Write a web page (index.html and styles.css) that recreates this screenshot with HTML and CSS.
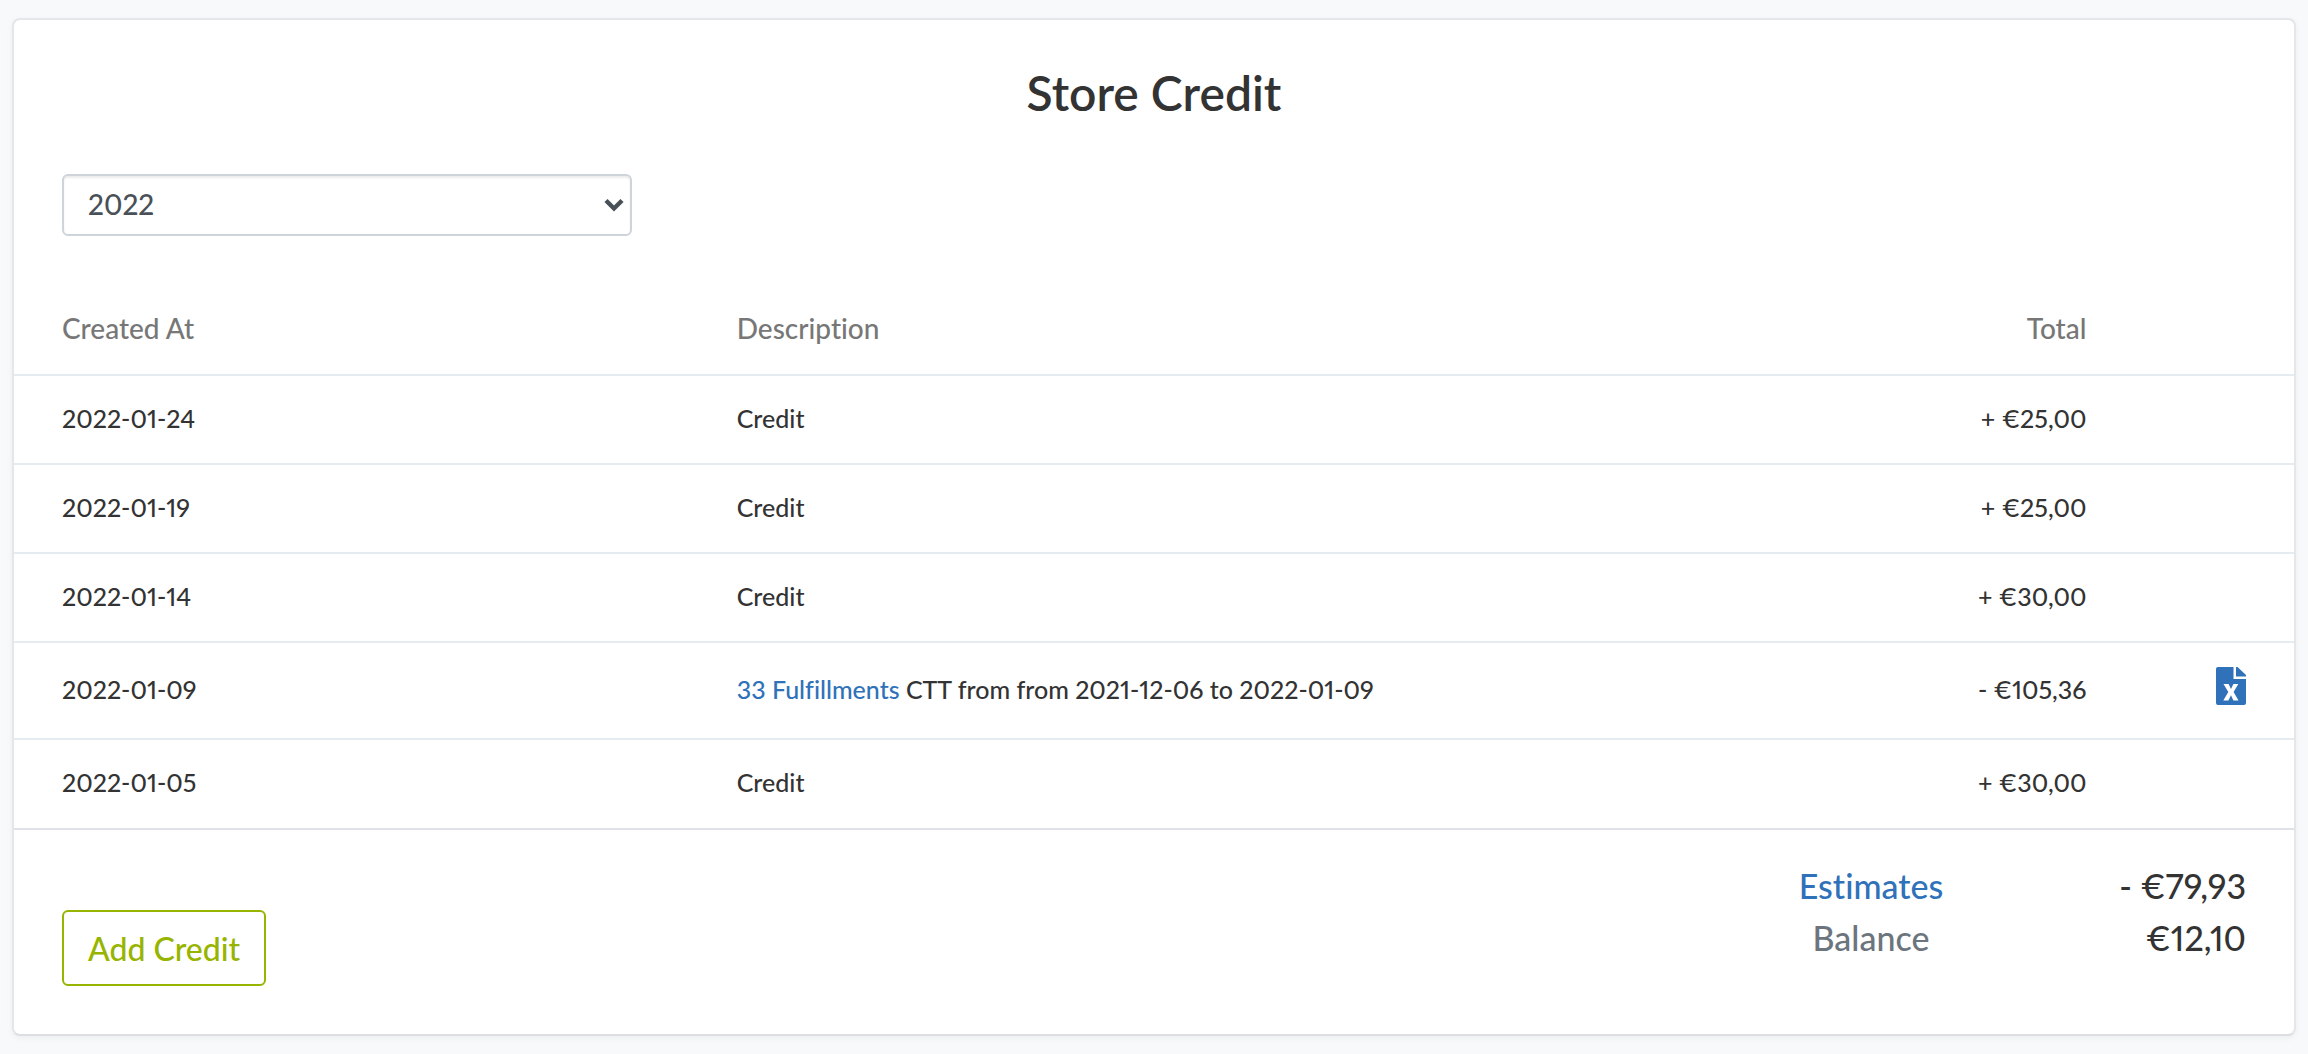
FILE: index.html
```html
<!DOCTYPE html>
<html lang="en">
<head>
    <meta charset="UTF-8">
    <meta name="viewport" content="width=device-width, initial-scale=1.0">
    <title>Store Credit</title>
    <link rel="stylesheet" href="styles.css">
</head>
<body>
    <main class="card">
        <h1 class="card-title">Store Credit</h1>

        <div class="year-filter">
            <select class="year-select" aria-label="Year">
                <option selected>2022</option>
                <option>2021</option>
            </select>
            <svg class="year-arrow" viewBox="0 0 20 14" aria-hidden="true">
                <path d="M2 2.5 L10 10.5 L18 2.5" fill="none" stroke="currentColor" stroke-width="4.4"/>
            </svg>
        </div>

        <table class="credit-table">
            <thead>
                <tr>
                    <th class="col-date" scope="col">Created At</th>
                    <th class="col-description" scope="col">Description</th>
                    <th class="col-total" scope="col">Total</th>
                    <td class="col-file"></td>
                </tr>
            </thead>
            <tbody>
                <tr>
                    <td>2022-01-24</td>
                    <td>Credit</td>
                    <td class="col-total">+ €25,00</td>
                    <td class="col-file"></td>
                </tr>
                <tr>
                    <td>2022-01-19</td>
                    <td>Credit</td>
                    <td class="col-total">+ €25,00</td>
                    <td class="col-file"></td>
                </tr>
                <tr>
                    <td>2022-01-14</td>
                    <td>Credit</td>
                    <td class="col-total">+ €30,00</td>
                    <td class="col-file"></td>
                </tr>
                <tr class="has-file">
                    <td>2022-01-09</td>
                    <td><a href="#">33 Fulfillments</a> CTT from from 2021-12-06 to 2022-01-09</td>
                    <td class="col-total">- €105,36</td>
                    <td class="col-file">
                        <a class="file-link" href="#" aria-label="Download Excel file">
                            <svg class="file-icon" viewBox="0 0 30 38" aria-hidden="true">
                                <path fill="currentColor" d="M2 0 H17.5 V12 H30 V36 Q30 38 28 38 H2 Q0 38 0 36 V2 Q0 0 2 0 Z"/>
                                <path fill="currentColor" d="M20 0 H21.5 L30 8 V9.5 H20 Z"/>
                                <path fill="#fff" d="M7.5 17 H12.6 L15 22 L17.4 17 H22.3 L17.6 25 L22.5 33.5 H17.4 L15 28.3 L12.4 33.5 H7.3 L12.3 25 Z"/>
                            </svg>
                        </a>
                    </td>
                </tr>
                <tr>
                    <td>2022-01-05</td>
                    <td>Credit</td>
                    <td class="col-total">+ €30,00</td>
                    <td class="col-file"></td>
                </tr>
            </tbody>
        </table>

        <footer class="card-footer">
            <button class="add-btn" type="button">Add Credit</button>
            <dl class="summary">
                <dt><a href="#">Estimates</a></dt>
                <dd>- €79,93</dd>
                <dt>Balance</dt>
                <dd>€12,10</dd>
            </dl>
        </footer>
    </main>
</body>
</html>
```
FILE: styles.css
```css
* {
    margin: 0;
    padding: 0;
    box-sizing: border-box;
}

body {
    background: #f8f9fb;
    color: #333;
    font-family: Lato, "Open Sans", sans-serif;
    font-size: 25px;
    font-weight: 500;
    font-variant-ligatures: none;
    font-variant-numeric: proportional-nums;
    padding: 18px 12px;
}

a {
    color: #3072b9;
    text-decoration: none;
}

a:hover {
    text-decoration: underline;
}

.card {
    background: #fff;
    border: 2px solid #e4e6e9;
    border-bottom-color: #dcdee1;
    border-radius: 8px;
    box-shadow: 0 2px 6px rgba(0, 0, 0, 0.05);
}

.card-title {
    padding: 46px 48px 0;
    font-size: 48px;
    font-weight: 600;
    line-height: 54px;
    text-align: center;
}

/* Year filter */
.year-filter {
    position: relative;
    width: 25%;
    margin: 54px 0 0 48px;
    color: #495057;
}

.year-select {
    display: block;
    width: 100%;
    height: 62px;
    padding: 0 24px 2px;
    appearance: none;
    background: #fff;
    border: 2px solid #ced4da;
    border-radius: 6px;
    box-shadow: inset 0 2px 2px rgba(0, 0, 0, 0.08);
    color: inherit;
    font: inherit;
    font-size: 28px;
}

.year-arrow {
    position: absolute;
    top: 24px;
    right: 8px;
    width: 20px;
    height: 14px;
    pointer-events: none;
}

/* Credit table */
.credit-table {
    width: 100%;
    margin-top: 47px;
    border-collapse: collapse;
    table-layout: fixed;
}

.credit-table th {
    height: 92px;
    padding-bottom: 2px;
    color: #777;
    font-size: 28px;
    font-weight: 500;
    text-align: left;
}

.credit-table td {
    height: 89px;
    padding-bottom: 4px;
    border-top: 2px solid #e6ebef;
}

.credit-table thead td {
    border-top: none;
}

.credit-table th:first-child,
.credit-table td:first-child {
    padding-left: 48px;
}

.col-date {
    width: 31.7%;
}

.credit-table .col-total {
    width: 22%;
    padding-right: 48px;
    text-align: right;
}

.col-file {
    width: 7%;
    padding-right: 48px;
    text-align: right;
}

.has-file td {
    height: 97px;
}

.file-link {
    display: inline-block;
}

.file-icon {
    display: block;
    width: 30px;
    height: 38px;
}

/* Footer */
.card-footer {
    display: flex;
    justify-content: space-between;
    align-items: flex-start;
    padding: 30px 48px 48px;
    border-top: 2px solid #dee2e6;
}

.add-btn {
    height: 76px;
    margin-top: 50px;
    padding: 0 24px;
    background: #fff;
    border: 2px solid #97b500;
    border-radius: 6px;
    color: #97b500;
    cursor: pointer;
    font: inherit;
    font-size: 32px;
}

.add-btn:hover {
    background: #97b500;
    color: #fff;
}

.summary {
    display: grid;
    grid-template-columns: 150px 300px;
    font-size: 34px;
    line-height: 52px;
}

.summary dt {
    color: #6c757d;
    text-align: center;
}

.summary dd {
    text-align: right;
}
```
